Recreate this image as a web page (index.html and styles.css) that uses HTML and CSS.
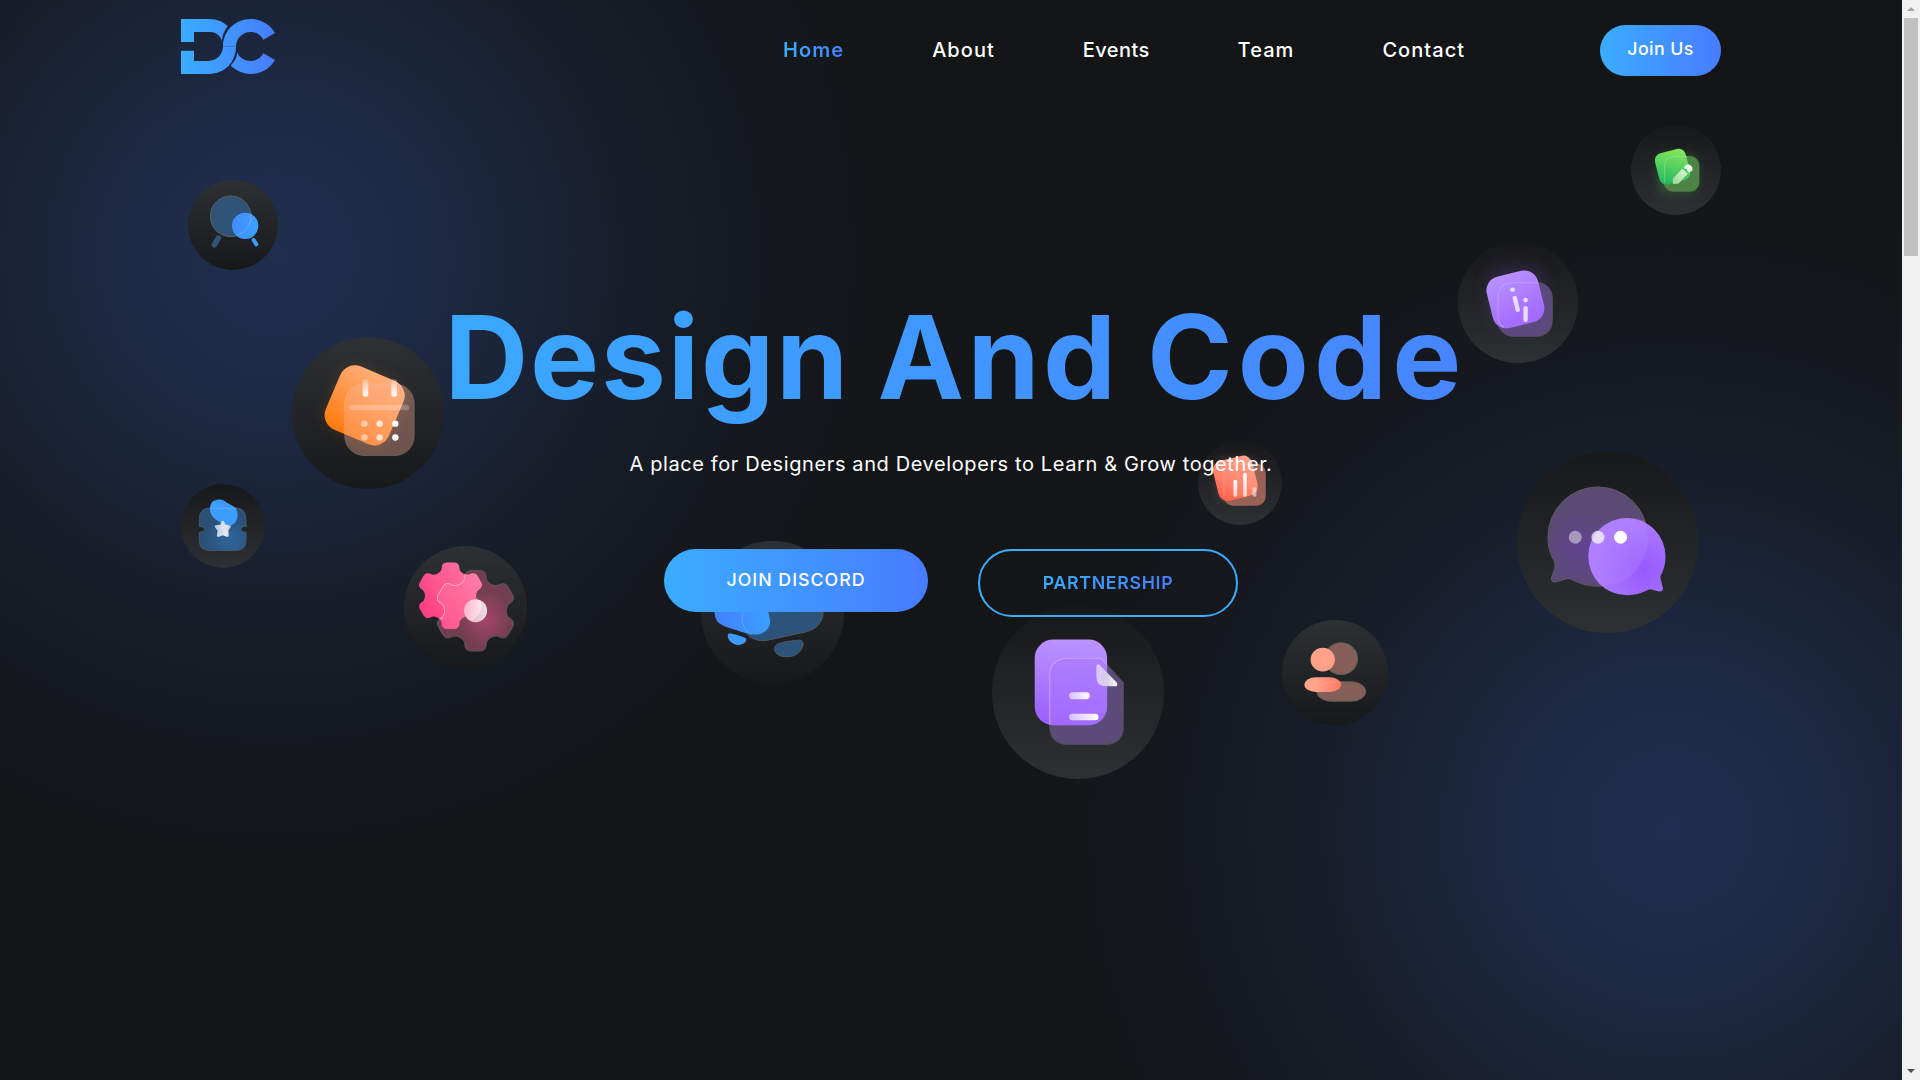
FILE: index.html
```html
<!DOCTYPE html>
<html lang="en">
<head>
<meta charset="utf-8">
<title>Design And Code</title>
<link rel="stylesheet" href="styles.css">
</head>
<body>
<div class="page">
  <header class="header">
    <a class="logo" href="#">
      <svg viewBox="63 57 282 165" width="94" height="55">
        <defs><linearGradient id="brand" gradientUnits="userSpaceOnUse" x1="63" y1="0" x2="345" y2="0"><stop stop-color="#3aadff"/><stop offset="1" stop-color="#477cff"/></linearGradient></defs>
        <g fill="url(#brand)">
          <path d="M63 57H148C172 57 190 66 203 79C194 91 187 104 186 122C180 106 166 96 150 96H102V126H63Z"/>
          <path d="M63 152H102V183H146C171 183 189 162 189 139C189 94 225 57 272 57C303 57 330 73 345 99L310 119C302 104 288 96 272 96C248 96 228 115 228 139C228 186 195 222 146 222H63Z"/>
          <path d="M232 156C237 172 252 183 272 183C288 183 302 175 310 160L345 180C330 206 303 222 272 222C248 222 227 212 212 196C223 186 231 172 232 156Z"/>
        </g>
        <path d="M189 139H228" stroke="#2f6fb8" stroke-width="2"/>
      </svg>
    </a>
    <nav class="nav">
      <a class="nav-link active" href="#"><span>Home</span></a>
      <a class="nav-link" href="#"><span>About</span></a>
      <a class="nav-link tight" href="#"><span>Events</span></a>
      <a class="nav-link" href="#"><span>Team</span></a>
      <a class="nav-link" href="#"><span>Contact</span></a>
    </nav>
    <a class="join" href="#"><span>Join Us</span></a>
  </header>

  <main class="hero">
    <h1 class="title"><span class="w1">Design</span> <span class="w2">And</span> <span class="w3">Code</span></h1>
    <p class="tagline"><span>A place for Designers and Developers to Learn &amp; Grow together.</span></p>
    <div class="actions">
      <a class="btn btn-fill" href="#"><span>JOIN DISCORD</span></a>
      <a class="btn btn-line" href="#"><span>PARTNERSHIP</span></a>
    </div>
  </main>

  <div class="badges">
    <svg class="badge down search" viewBox="83 540 270 270">
      <defs><linearGradient id="b1" x1="0" x2="1"><stop stop-color="#4589ff"/><stop offset="1" stop-color="#3aa4ff"/></linearGradient></defs>
      <circle cx="211" cy="649" r="61" fill="#2f5478" stroke="#59626b" stroke-width="3"/>
      <path d="M174 715L162 734" stroke="#2f5478" stroke-width="17" stroke-linecap="round"/>
      <circle cx="254.500" cy="677.500" r="39.500" fill="url(#b1)"/>
      <path d="M272 640A61 61 0 0 1 232 706" fill="none" stroke="#7cbcff" stroke-width="3" opacity=".65"/>
      <path d="M280 720L288 733" stroke="#3d9bff" stroke-width="12" stroke-linecap="round"/>
    </svg>

    <svg class="badge down calendar" viewBox="35 52 456 456">
      <defs>
        <linearGradient id="o1" x1=".4" y1="0" x2=".2" y2="1"><stop stop-color="#ffad78"/><stop offset="1" stop-color="#ff7a0d"/></linearGradient>
        <linearGradient id="pin" x1="0" y1="0" x2="0" y2="1"><stop stop-color="#fff" stop-opacity=".2"/><stop offset="1" stop-color="#fff"/></linearGradient>
        <filter id="glow" x="-50%" y="-50%" width="200%" height="200%"><feGaussianBlur stdDeviation="22"/></filter>
      </defs>
      <rect x="150" y="155" width="206" height="206" rx="48" transform="rotate(23 253 257)" fill="#ff7d14" opacity=".16" filter="url(#glow)"/>
      <rect x="150" y="154" width="206" height="206" rx="48" transform="rotate(23 253 257)" fill="url(#o1)"/>
      <rect x="193" y="193" width="209" height="215" rx="58" fill="#ffb49a" fill-opacity=".36" stroke="#fff" stroke-opacity=".12" stroke-width="3"/>
      <rect x="247" y="178" width="17" height="53" rx="8" fill="url(#pin)"/><rect x="333" y="178" width="17" height="53" rx="8" fill="url(#pin)"/>
      <rect x="207" y="255" width="180" height="17" rx="8" fill="#fff" opacity=".24"/>
      <g fill="#fff"><circle cx="252" cy="312" r="9.500" opacity=".5"/><circle cx="298" cy="312" r="9.500" opacity=".75"/><circle cx="345" cy="312" r="9.500"/><circle cx="252" cy="353.500" r="9.500" opacity=".5"/><circle cx="298" cy="353.500" r="9.500" opacity=".75"/><circle cx="345" cy="353.500" r="9.500"/></g>
    </svg>

    <svg class="badge up ticket" viewBox="33 41 253 253">
      <defs>
        <radialGradient id="t1" cx=".65" cy=".75" r=".6"><stop stop-color="#2c659d"/><stop offset="1" stop-color="#2c5075"/></radialGradient>
        <linearGradient id="t2"><stop stop-color="#b8cce4"/><stop offset=".7" stop-color="#e6e9ed"/><stop offset="1" stop-color="#c3c9d1"/></linearGradient>
      </defs>
      <path d="M88 148Q88 113 120 113H198Q229 113 229 148V169Q214 169 214 177Q214 186 229 186V210Q229 241 200 241H118Q88 241 88 210V186Q104 186 104 177Q104 169 88 169Z" fill="url(#t1)" stroke="#56616b" stroke-width="2"/>
      <path d="M133 91C150 84 160 88 168 95L190 108C200 114 205 124 203 138C201 154 193 165 180 166C168 167 152 158 142 150C130 144 120 131 120 116C120 104 125 95 133 91Z" fill="#3c9cff"/>
      <path d="M122 114H200" stroke="#67b3ff" stroke-width="4" opacity=".6"/>
      <path d="M159 152Q163 152 166 163L182 166Q186 168 176 180L177 198Q175 203 159 195Q143 203 141 198L143 181Q133 170 135 166L152 163Q155 152 159 152Z" fill="url(#t2)"/>
    </svg>

    <svg class="badge down gear" viewBox="702 227 370 370">
      <defs>
        <path id="cog" d="M-27-80Q-27-100-12-100H12Q27-100 27-80C30-69 44.700-60.400 55.800-63.400Q73.100-73.400 80.600-60.400L92.600-39.600Q100.100-26.600 82.800-16.600C74.800-8.500 74.800 8.500 82.800 16.600Q100.100 26.600 92.600 39.600L80.600 60.400Q73.100 73.400 55.800 63.400C44.700 60.400 30 69 27 80Q27 100 12 100H-12Q-27 100-27 80C-30 69-44.700 60.400-55.800 63.400Q-73.100 73.400-80.600 60.400L-92.600 39.600Q-100.100 26.600-82.800 16.600C-74.800 8.500-74.800-8.500-82.800-16.600Q-100.100-26.600-92.600-39.600L-80.600-60.400Q-73.100-73.400-55.800-63.400C-44.700-60.400-30-69-27-80Z"/>
        <radialGradient id="g1" cx=".62" cy=".6" r=".35"><stop stop-color="#a84469"/><stop offset="1" stop-color="#733f50"/></radialGradient>
        <linearGradient id="g2" x1="1" y1="0" x2="0" y2=".7"><stop stop-color="#ff7fa6"/><stop offset="1" stop-color="#ff3d80"/></linearGradient>
        <linearGradient id="g3"><stop stop-color="#ffb3c8"/><stop offset=".6" stop-color="#ffdce6"/><stop offset="1" stop-color="#fff"/></linearGradient>
        <clipPath id="cogclip"><use href="#cog" transform="translate(842 376.500)"/></clipPath>
      </defs>
      <use href="#cog" transform="translate(917 422) scale(1.210)" fill="url(#g1)" stroke="#5b5b60" stroke-width="2"/>
      <use href="#cog" transform="translate(842 376.500)" fill="url(#g2)"/>
      <g clip-path="url(#cogclip)"><use href="#cog" transform="translate(917 422) scale(1.210)" fill="#ff9dba" fill-opacity=".2" stroke="#ffa5bf" stroke-width="2.500"/></g>
      <circle cx="917" cy="421.500" r="34.500" fill="url(#g3)"/>
      <path d="M928 389A34.500 34.500 0 0 1 905 454Q932 434 936 405Q936 396 928 389Z" fill="#b9a5ae" opacity=".35"/>
    </svg>

    <svg class="badge down image" viewBox="700.500 541 143 143">
      <defs><linearGradient id="i1" x1="0" x2="1"><stop stop-color="#4480ff"/><stop offset="1" stop-color="#3a9fff"/></linearGradient></defs>
      <path d="M742 590H822.500V613C822 623 816 629 805 632L768 640C753 643 741 634 741 620Z" fill="#2c5379" stroke="#4d5a66"/>
      <path d="M714 590H763L769 618C772 627 764 635 754 634.500C746 634 735 630 726 627C717 624 714 619 714 611Z" fill="url(#i1)"/>
      <path d="M744 609C738 620 744 631 751 634.500" fill="none" stroke="#74b5ff" opacity=".6"/>
      <path d="M728 633.500C732 633 740 636 745 638C748 641 742 645 738 645C731 645 725 638 728 633.500Z" fill="#3b9cff"/>
      <path d="M777 644C783 641.500 792 641 799 640C806 641 802 651 795 655C787 658.500 776 657 774 650Q773.500 646 777 644Z" fill="#2c5379" stroke="#4d5a66"/>
    </svg>

    <svg class="badge up document" viewBox="35 48 517 518">
      <defs>
        <linearGradient id="d1" x1=".5" y1="0" x2=".4" y2="1"><stop stop-color="#bb93ff"/><stop offset="1" stop-color="#9b5fff"/></linearGradient>
        <linearGradient id="d2"><stop stop-color="#d9bfff"/><stop offset="1" stop-color="#fff"/></linearGradient>
        <linearGradient id="d3"><stop stop-color="#dcc8ff"/><stop offset=".5" stop-color="#d7cce8"/><stop offset="1" stop-color="#fff"/></linearGradient>
        <clipPath id="docclip"><rect x="163" y="148" width="217" height="257" rx="56"/></clipPath>
      </defs>
      <path d="M208 260Q208 204 264 204H361L429 277V407Q429 463 373 463H264Q208 463 208 407Z" fill="#5b4c77" stroke="#4f495b" stroke-width="3"/>
      <rect x="163" y="148" width="217" height="257" rx="56" fill="url(#d1)"/>
      <g clip-path="url(#docclip)"><path d="M208 260Q208 204 264 204H361L429 277V407Q429 463 373 463H264Q208 463 208 407Z" fill="#a873ff" fill-opacity=".5" stroke="#c7a5ff" stroke-width="3"/></g>
      <path d="M348 228Q350 219 357 224L408 276Q414 284 407 288H374Q348 287 348 260Z" fill="url(#d3)"/>
      <rect x="266" y="306" width="62" height="21" rx="10" fill="url(#d2)"/><rect x="266" y="371" width="88" height="19" rx="9.500" fill="url(#d2)"/>
    </svg>

    <svg class="badge down people" viewBox="907 90 316 315">
      <defs><linearGradient id="p1" x1="0" x2="1"><stop offset=".3" stop-color="#ffa58c"/><stop offset="1" stop-color="#ff7860"/></linearGradient></defs>
      <g fill="#835f57" stroke="#5b6060" stroke-width="2.500"><ellipse cx="1084" cy="206" rx="50" ry="48"/><rect x="1011" y="275" width="147" height="59" rx="44" ry="29"/></g>
      <ellipse cx="1029" cy="209" rx="36.500" ry="35.500" fill="#ffa187"/>
      <rect x="974" y="262" width="110" height="44" rx="34" ry="22" fill="url(#p1)"/>
      <path d="M1040 180Q1028 205 1040 232M1012 304Q1018 281 1048 277H1082" fill="none" stroke="#ffb6a3" stroke-width="2" opacity=".5"/>
    </svg>

    <svg class="badge up chart" viewBox="25 33 253 253">
      <defs>
        <linearGradient id="c1" x1="1" y1="0" x2="0" y2="1"><stop stop-color="#ffa58c"/><stop offset=".5" stop-color="#ff8b74"/><stop offset="1" stop-color="#ff5a43"/></linearGradient>
        <linearGradient id="c2" x1="0" y1="0" x2="0" y2="1"><stop stop-color="#fff"/><stop offset="1" stop-color="#ffd0c6"/></linearGradient>
        <filter id="glow2" x="-50%" y="-50%" width="200%" height="200%"><feGaussianBlur stdDeviation="14"/></filter>
      </defs>
      <rect x="80" y="85" width="125" height="125" rx="28" fill="#ff8b74" opacity=".2" filter="url(#glow2)"/>
      <rect x="102" y="101" width="127" height="127" rx="28" fill="#9a6156"/>
      <rect x="77" y="84" width="121" height="123" rx="28" transform="rotate(-14 137 145)" fill="url(#c1)"/>
      <path d="M103 200V128Q103 102 129 102H190" fill="none" stroke="#ffb9a9" stroke-width="2" opacity=".55"/>
      <rect x="132" y="150" width="11" height="51" rx="5" fill="url(#c2)"/><rect x="161" y="129" width="11" height="72" rx="5" fill="url(#c2)"/><rect x="189" y="172" width="12" height="29" rx="5" fill="#fff" opacity=".5"/>
    </svg>

    <svg class="badge up info" viewBox="53 396 361 361">
      <defs>
        <linearGradient id="n1" x1=".4" y1="0" x2=".6" y2="1"><stop stop-color="#b98fff"/><stop offset="1" stop-color="#a168ff"/></linearGradient>
      </defs>
      <rect x="138" y="460" width="180" height="180" rx="50" fill="#9a5fff" opacity=".12" filter="url(#glow)"/>
      <rect x="172" y="517" width="164" height="162" rx="46" fill="#5c4a7c" stroke="#594e6d" stroke-width="2"/>
      <rect x="146" y="489" width="158" height="158" rx="42" transform="rotate(-14 225 568)" fill="url(#n1)"/>
      <path d="M190 652Q173 643 173 612V562Q173 518 218 518H294" fill="none" stroke="#cba9ff" stroke-width="3" opacity=".65"/>
      <g fill="#e9dcff"><circle cx="216.500" cy="539" r="7"/><circle cx="255.500" cy="570" r="7"/><rect x="249" y="588" width="13" height="48" rx="6"/><rect x="221" y="557" width="13" height="49" rx="6" transform="rotate(-14 227.500 581)"/></g>
    </svg>

    <svg class="badge up edit" viewBox="573 45 270 270">
      <defs>
        <linearGradient id="e1" x1=".8" y1="0" x2=".3" y2="1"><stop stop-color="#86e85b"/><stop offset="1" stop-color="#27ba61"/></linearGradient>
        <linearGradient id="e2" x1="1" y1="0" x2="0" y2="1"><stop stop-color="#fff"/><stop offset="1" stop-color="#8edb8b"/></linearGradient>
      </defs>
      <rect x="650" y="130" width="125" height="125" rx="28" fill="#5fd04e" opacity=".18" filter="url(#glow2)"/>
      <rect x="672" y="139" width="105" height="105" rx="27" fill="#4d8345" stroke="#5b8355" stroke-width="2"/>
      <rect x="650" y="122" width="95" height="96" rx="22" transform="rotate(-14 697 170)" fill="url(#e1)"/>
      <path d="M674 217V168Q674 140 702 140H742" fill="none" stroke="#a0ec8c" stroke-width="2.500" opacity=".6"/>
      <path d="M698 206L727 176L743 191L720 217Q716 222 708 222H699ZM731 173L738 165Q744 160 751 166Q761 174 756 182L747 188L741 181V177L735 177Z" fill="url(#e2)"/>
    </svg>

    <svg class="badge up chat" viewBox="51 36 542 542">
      <defs>
        <radialGradient id="h1" cx=".35" cy=".62" r=".4"><stop stop-color="#624391"/><stop offset="1" stop-color="#5a4a74"/></radialGradient>
        <radialGradient id="h2" cx=".72" cy=".68" r=".65"><stop stop-color="#9759ff"/><stop offset="1" stop-color="#ac7bff"/></radialGradient>
      </defs>
      <path d="M294 141A149 149 0 1 1 294 439C262 439 235 430 210 416C198 414 181 425 163 427Q153 426 155 412L165 384Q167 374 162 362C149 339 144 318 144 290A150 150 0 0 1 294 141Z" fill="url(#h1)" stroke="#5d5b63" stroke-width="3"/>
      <path d="M381 234A116 116 0 0 1 497 350C497 373 491 392 482 408Q481 416 484 423L489 444Q491 455 479 455C468 453 457 448 448 448C427 460 406 466 381 466A116 116 0 0 1 381 234Z" fill="url(#h2)"/>
      <path d="M434 242C453 289 445 345 414 384C388 417 350 437 307 439C280 419 262 376 267 330C273 279 318 234 381 234C402 234 419 237 434 242Z" fill="#b78cff" opacity=".28"/>
      <g fill="#fff"><circle cx="226" cy="292" r="19.500" opacity=".45"/><circle cx="294" cy="292" r="19.500" opacity=".72"/><circle cx="362" cy="292" r="19.500"/></g>
    </svg>
  </div>
</div>
<div class="scrollbar"><i class="arrow-up"></i><i class="thumb"></i><i class="arrow-down"></i></div>
</body>
</html>
```

FILE: styles.css
```css
* { box-sizing: border-box; }

body {
  margin: 0;
  height: 1080px;
  overflow: hidden;
  display: grid;
  grid-template-columns: 1fr 18px;
  background: #131517;
  color: #fff;
  font-family: Inter, "Open Sans", sans-serif;
}

a { color: inherit; text-decoration: none; }

.page {
  position: relative;
  height: 1080px;
  overflow: hidden;
  padding: 0 181px;
  background:
    radial-gradient(circle 760px at 275px 255px, rgba(31,46,78,1) 0%, rgba(31,46,78,.92) 13%, rgba(31,46,78,.73) 26%, rgba(31,46,78,.49) 39%, rgba(31,46,78,.28) 52%, rgba(31,46,78,.14) 66%, rgba(31,46,78,.05) 82%, rgba(31,46,78,0) 100%),
    radial-gradient(circle 760px at 1670px 830px, rgba(31,46,78,1) 0%, rgba(31,46,78,.92) 13%, rgba(31,46,78,.73) 26%, rgba(31,46,78,.49) 39%, rgba(31,46,78,.28) 52%, rgba(31,46,78,.14) 66%, rgba(31,46,78,.05) 82%, rgba(31,46,78,0) 100%),
    #131516;
}

.header {
  position: relative;
  z-index: 2;
  height: 101px;
  display: flex;
  align-items: center;
}

.logo { height: 55px; margin-bottom: 8px; }
.logo svg { display: block; }

.nav { display: flex; gap: 88px; margin: 0 0 2px 508px; }

.nav-link {
  font-size: 20px;
  font-weight: 500;
  line-height: 30px;
  letter-spacing: 1.050px;
  white-space: nowrap;
}

.nav-link.tight { letter-spacing: .4px; }

.nav-link.active span, .btn-line span {
  background: linear-gradient(90deg, #3aadff, #477cff);
  -webkit-background-clip: text;
  background-clip: text;
  color: transparent;
}

.nav-link.active { font-weight: 600; }

.join {
  margin-left: auto;
  width: 121px;
  height: 51px;
  border-radius: 26px;
  background: linear-gradient(90deg, #3aadff, #477cff);
  font-size: 17.800px;
  font-weight: 500;
  line-height: 48px;
  letter-spacing: .4px;
  text-align: center;
}

.hero {
  position: relative;
  z-index: 2;
  display: flex;
  flex-direction: column;
  align-items: center;
  padding-top: 187px;
}

.title {
  margin: 0;
  height: 139px;
  padding-left: 9px;
  font-size: 116px;
  font-weight: 700;
  line-height: 139px;
  white-space: nowrap;
  background: linear-gradient(90deg, #3aa8ff, #4785ff);
  -webkit-background-clip: text;
  background-clip: text;
  color: transparent;
}

.w1 { letter-spacing: 1.800px; }
.w2 { letter-spacing: 3.300px; }
.w3 { letter-spacing: 5.100px; }

.tagline {
  margin: 22px 0 0;
  font-size: 20px;
  line-height: 30px;
  letter-spacing: .61px;
  white-space: nowrap;
}

.actions {
  display: flex;
  align-items: flex-start;
  gap: 50px;
  margin-top: 70px;
}

.btn { font-size: 17.800px; font-weight: 500; text-align: center; }

.btn-fill {
  width: 264px;
  height: 63px;
  border-radius: 32px;
  background: linear-gradient(90deg, #3aadff, #477cff);
  line-height: 61px;
  letter-spacing: 1px;
}

.btn-line {
  width: 260px;
  height: 68px;
  border: 2px solid #3aadff;
  border-radius: 34px;
  font-weight: 600;
  line-height: 63px;
  letter-spacing: .65px;
}

/* Floating badges scattered behind the hero copy */
.badge { position: absolute; z-index: 1; border-radius: 50%; }
.down { background: linear-gradient(#2d3134, #17181a); }
.up { background: linear-gradient(#17181a, #2d3134); }
.search { left: 188px; top: 180px; width: 90px; height: 90px; }
.calendar { left: 291.500px; top: 337px; width: 152px; height: 152px; }
.ticket { left: 181px; top: 483.500px; width: 84px; height: 84px; }
.gear { left: 404px; top: 545.500px; width: 123px; height: 123px; }
.image { left: 700.500px; top: 541px; width: 143px; height: 143px; background: linear-gradient(#2d3034, #17181a); }
.document { left: 991.500px; top: 606px; width: 172.500px; height: 173px; }
.people { left: 1282px; top: 620px; width: 105.500px; height: 105px; }
.chart { left: 1198px; top: 441px; width: 84px; height: 84px; }
.info { left: 1457.500px; top: 242px; width: 120.500px; height: 120.500px; }
.edit { left: 1631px; top: 125px; width: 90px; height: 90px; }
.chat { left: 1517px; top: 452px; width: 180.500px; height: 180.500px; }

.scrollbar {
  display: flex;
  flex-direction: column;
  align-items: center;
  height: 1080px;
  padding: 7px 0;
  background: #f1f1f1;
}
.arrow-up { border: 4px solid transparent; border-top: 0; border-bottom: 4px solid #a3a3a3; }
.thumb { width: 14px; height: 238px; margin-top: 7px; background: #c1c1c1; }
.arrow-down { margin-top: auto; border: 4px solid transparent; border-bottom: 0; border-top: 4px solid #505050; }
```
